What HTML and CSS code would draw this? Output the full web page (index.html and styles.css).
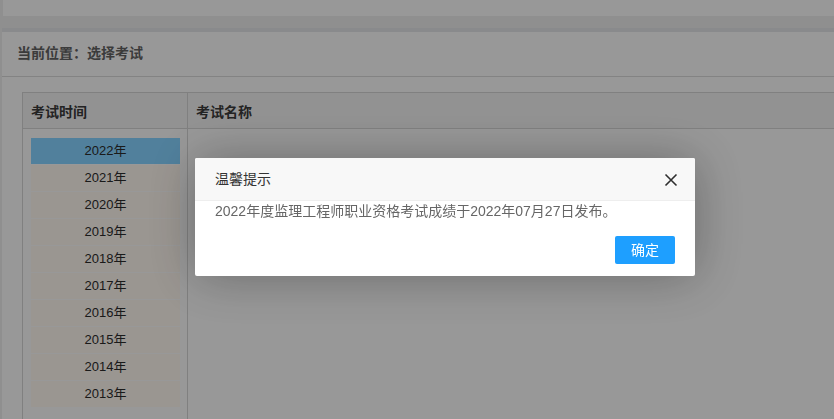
FILE: index.html
```html
<!DOCTYPE html>
<html lang="zh-CN">
<head>
	<meta charset="UTF-8">
	<meta name="viewport" content="width=device-width, initial-scale=1.0">
	<title>选择考试</title>
	<link rel="stylesheet" href="styles.css">
</head>
<body>
<div class="topbar"></div>

<div class="main">
	<div class="crumb">当前位置：选择考试</div>

	<table class="exam-table">
		<thead>
			<tr>
				<th class="col-year">考试时间</th>
				<th>考试名称</th>
			</tr>
		</thead>
		<tbody>
			<tr>
				<td class="col-year">
					<ul class="year-list">
						<li class="active">2022年</li>
						<li>2021年</li>
						<li>2020年</li>
						<li>2019年</li>
						<li>2018年</li>
						<li>2017年</li>
						<li>2016年</li>
						<li>2015年</li>
						<li>2014年</li>
						<li>2013年</li>
					</ul>
				</td>
				<td></td>
			</tr>
		</tbody>
	</table>
</div>

<!-- 弹层 -->
<div class="shade"></div>
<div class="dialog">
	<div class="dialog-title">
		温馨提示
		<span class="dialog-close">
			<svg width="14" height="14" viewBox="0 0 14 14"><path d="M1.5 1.5 L12.5 12.5 M12.5 1.5 L1.5 12.5" stroke="#2f2f2f" stroke-width="1.6" fill="none"/></svg>
		</span>
	</div>
	<div class="dialog-content">2022年度监理工程师职业资格考试成绩于2022年07月27日发布。</div>
	<div class="dialog-btns">
		<a href="#" class="btn">确定</a>
	</div>
</div>
</body>
</html>
```

FILE: styles.css
```css
* {
    margin: 0;
    padding: 0;
    box-sizing: border-box;
}

body {
    background: #cdcdcd;
    font-family: 'Liberation Sans', 'Noto Sans CJK SC', sans-serif;
    font-size: 14px;
    color: #333;
    overflow: hidden;
    height: 419px;
}

.topbar {
    height: 16px;
    margin-left: 3px;
    background: #dadada;
}

.main {
    margin-top: 12px;
    margin-left: 2px;
    border-top: 4px solid #c5c6c9;
    background: #dadada;
    height: 400px;
}

.crumb {
    height: 45px;
    line-height: 42px;
    padding-left: 15px;
    font-weight: bold;
    color: #555;
    border-bottom: 1px solid #bcbcbc;
}

.exam-table {
    margin: 15px 0 0 20px;
    width: 840px;
    border-collapse: collapse;
}

.exam-table th {
    height: 36px;
    padding: 0 8px;
    text-align: left;
    font-weight: bold;
    color: #333;
    background: #d2d2d2;
    border: 1px solid #b8b8b8;
}

.exam-table td {
    border: 1px solid #b8b8b8;
    vertical-align: top;
    height: 300px;
}

.exam-table .col-year {
    width: 165px;
}

.exam-table td.col-year {
    padding: 9px 7px 9px 8px;
}

.year-list {
    list-style: none;
}

.year-list li {
    height: 26px;
    line-height: 26px;
    margin-bottom: 1px;
    text-align: center;
    font-size: 13px;
    color: #262626;
    background: #ddd7d0;
}

.year-list li.active {
    background: #74b8e0;
}

.shade {
    position: fixed;
    top: 0;
    left: 0;
    right: 0;
    bottom: 0;
    background: rgba(0, 0, 0, 0.3);
}

.dialog {
    position: fixed;
    top: 158px;
    left: 195px;
    width: 500px;
    background: #fff;
    border-radius: 2px;
    box-shadow: 1px 1px 50px rgba(0, 0, 0, 0.3);
}

.dialog-title {
    position: relative;
    height: 43px;
    line-height: 42px;
    padding-left: 20px;
    background: #f8f8f8;
    border-bottom: 1px solid #eee;
    color: #333;
    border-radius: 2px 2px 0 0;
}

.dialog-close {
    position: absolute;
    right: 17px;
    top: 15px;
    width: 14px;
    height: 14px;
    line-height: 0;
}

.dialog-content {
    padding: 0 20px;
    height: 30px;
    line-height: 20px;
    color: #666;
}

.dialog-btns {
    padding: 5px 20px 12px;
    text-align: right;
}

.btn {
    display: inline-block;
    height: 28px;
    line-height: 28px;
    padding: 0 16px;
    background: #1e9fff;
    color: #fff;
    font-size: 14px;
    text-decoration: none;
    border-radius: 2px;
}
```
